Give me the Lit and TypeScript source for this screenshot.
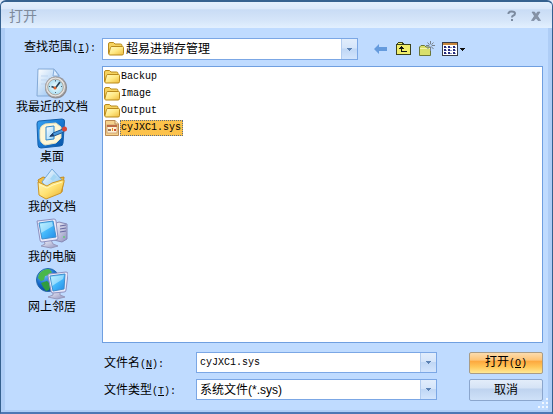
import { LitElement, html, css, svg } from "lit";
import { customElement, property, state } from "lit/decorators.js";
import { classMap } from "lit/directives/class-map.js";

const folderIcon = html`<svg class="icon" width="16" height="16" viewBox="0 0 16 16" aria-hidden="true">
  <defs><linearGradient id="ff" x1="0" y1="0" x2="1" y2="1"><stop offset="0" stop-color="#fffbc8"/><stop offset=".5" stop-color="#ffe985"/><stop offset="1" stop-color="#eebb3c"/></linearGradient></defs>
  <path d="M.5 12.500V3Q.5 1.500 2 1.500H5.500L7 3H12.500Q14 3 14 4.500V7H4Z" fill="#f5d25f" stroke="#b98a1c"/>
  <path d="M1 13.500V12L2.500 6.500Q2.800 5.500 4 5.500H14.500Q15.500 5.500 15.500 6.500V12.500Q15.500 14 14 14H2Q1 14 1 13.500Z" fill="url(#ff)" stroke="#b98a1c"/>
</svg>`;

const sysIcon = html`<svg class="icon" width="16" height="16" viewBox="0 0 16 16" aria-hidden="true">
  <path d="M1.500 .5H11L14.500 4V15.500H1.500Z" fill="#f6d28d" stroke="#b98a55"/>
  <path d="M11 .5V4H14.500" fill="#fff0cb" stroke="#b98a55"/>
  <rect x="3" y="5" width="10" height="8" fill="#fff2d4" stroke="#b98d67" stroke-width=".7"/>
  <rect x="3" y="5" width="10" height="2" fill="#bd6a45"/>
  <rect x="4" y="9" width="3" height="2" fill="#9b7459"/><rect x="8" y="8" width="1" height="3" fill="#e98924"/><rect x="10" y="9" width="2" height="2" fill="#cc4e38"/>
</svg>`;

const recentArt = svg`
  <defs><linearGradient id="g1" x1="0" y1="0" x2="1" y2="1"><stop offset="0" stop-color="#fff"/><stop offset="1" stop-color="#87baf0"/></linearGradient>
  <radialGradient id="g2"><stop offset="0" stop-color="#f4ffff"/><stop offset="1" stop-color="#a9dcf2"/></radialGradient></defs>
  <path d="M2 1H18L23 7V28H1Z" fill="url(#g1)" stroke="#83a9d6"/>
  <path d="M18 1L17 8H23Z" fill="#dcecff" stroke="#86addb"/>
  <path d="M5 8H12M5 12H11M5 16H9" stroke="#bfd5ef"/>
  <circle cx="20" cy="19.500" r="11" fill="#8b8b91"/>
  <circle cx="19.500" cy="19" r="10" fill="#e6e4e2" stroke="#aaa7a7"/>
  <circle cx="19.500" cy="19" r="7.800" fill="url(#g2)" stroke="#b0a9a0"/>
  <path d="M15.500 18.500L19.500 20L24 14" fill="none" stroke="#27445b" stroke-width="1.700"/>
  <path d="M19.500 12V13.500M19.500 24V25M13 18.500H14M25 18.500H26" stroke="#536b7d"/>
  <circle cx="19" cy="20" r="1.500" fill="#df662f"/>`;

const desktopArt = svg`
  <defs><linearGradient id="d1" x1="0" y1="0" x2="1" y2="1"><stop offset="0" stop-color="#3aa4f2"/><stop offset=".5" stop-color="#1979d3"/><stop offset="1" stop-color="#0750a2"/></linearGradient>
  <linearGradient id="d2" x1="0" y1="0" x2="1" y2="1"><stop offset="0" stop-color="#fff"/><stop offset="1" stop-color="#92d3fa"/></linearGradient></defs>
  <path d="M3 3L26 1Q29 1 28.500 4L27 25Q27 28 24 28L5 30Q2 30 2 27L1 6Q1 3 3 3Z" fill="url(#d1)" stroke="#1560ac"/>
  <path d="M9 6L20 5L25 9V20L20 25L9 27Q4 25 4 20V12Q4 8 9 6Z" fill="#fff7d6" stroke="#e5e0bc"/>
  <path d="M10 9L18 8V21L10 22Z" fill="url(#d2)" stroke="#3288cc"/>
  <path d="M14 18L17 15L27 11L28 14L18 18Z" fill="#4a9ade" stroke="#1b5794"/>
  <path d="M13 19L17 15L18 18Z" fill="#203c66"/>
  <circle cx="28.500" cy="11" r="2.500" fill="#d94637"/>`;

const documentsArt = svg`
  <defs><linearGradient id="m1" x1="0" y1="0" x2="1" y2="1"><stop offset="0" stop-color="#fffac0"/><stop offset=".5" stop-color="#ffe272"/><stop offset="1" stop-color="#e9aa28"/></linearGradient>
  <linearGradient id="m2" x1="0" y1="0" x2="1" y2="1"><stop offset="0" stop-color="#fff"/><stop offset="1" stop-color="#70b9ef"/></linearGradient></defs>
  <path d="M2 12L7 9L14 11L28 9L26 24L7 28Z" fill="#efbd42" stroke="#c28b20"/>
  <path d="M6 14L16 1L27 13L15 25Z" fill="url(#m2)" stroke="#72a9da"/>
  <path d="M14 11L18 6L21 9L17 13Z" fill="#a3d6f4"/>
  <path d="M2 14L11 18L16 15L26 12Q29 11 28 14L25 25L10 31L3 27Z" fill="url(#m1)" stroke="#cb9629"/>
  <path d="M4 17L11 20L17 17L26 14" fill="none" stroke="#fff7bd"/>`;

const monitorDefs = svg`<defs><linearGradient id="c1" x1="0" y1="0" x2="1" y2="1"><stop offset="0" stop-color="#b3f1ff"/><stop offset=".5" stop-color="#45b9fb"/><stop offset="1" stop-color="#208ae7"/></linearGradient>
  <linearGradient id="c2" x1="0" y1="0" x2="1" y2="1"><stop offset="0" stop-color="#f8f8ff"/><stop offset="1" stop-color="#8e91bd"/></linearGradient>
  <radialGradient id="c3" cx=".35" cy=".25" r=".8"><stop offset="0" stop-color="#79c8ff"/><stop offset=".6" stop-color="#1367ca"/><stop offset="1" stop-color="#073f91"/></radialGradient></defs>`;

const computerArt = svg`${monitorDefs}
  <path d="M18 6L23 4L31 6V21L26 24L18 22Z" fill="url(#c2)" stroke="#8688b4"/>
  <path d="M24 8L30 7M24 11L30 10M24 14L30 13" stroke="#6668a0"/>
  <circle cx="28" cy="19" r="1" fill="#62ca77"/>
  <path d="M8 22L15 22L17 26L22 28L15 30L5 28L9 26Z" fill="url(#c2)" stroke="#9698bb"/>
  <path d="M1 3L18 1Q20 1 20 3L22 20Q22 22 20 22L6 24Q4 24 4 22Z" fill="#e9e8f8" stroke="#8d91c0"/>
  <path d="M3 5L17 3L20 19L6 21Z" fill="url(#c1)" stroke="#3f8fcf"/>
  <path d="M4 6L16 4L17 8L5 15Z" fill="#dbf8ff" opacity=".5"/>`;

const networkArt = svg`${monitorDefs}
  <circle cx="12" cy="12" r="11.500" fill="url(#c3)" stroke="#2469aa"/>
  <path d="M3 6Q7 1 13 1L16 4L13 7L9 8L8 12L5 13L2 10Z" fill="#49b74b"/>
  <path d="M5 15L11 13L15 17L13 22L10 23L7 19Z" fill="#309c3f"/>
  <path d="M17 23L24 23L24 27L29 29L21 31L12 29L17 27Z" fill="url(#c2)" stroke="#9698bb"/>
  <path d="M13 6L30 4Q32 4 32 6L30 22Q30 24 28 24L17 25Q15 25 15 23L12 8Q12 6 13 6Z" fill="#e9e8f8" stroke="#8d91c0"/>
  <path d="M14 8L29 6L28 21L17 23Z" fill="url(#c1)" stroke="#3f8fcf"/>
  <path d="M15 9L28 7L27 11L16 18Z" fill="#dbf8ff" opacity=".5"/>`;

const places = [
  { name: "我最近的文档", art: recentArt },
  { name: "桌面", art: desktopArt },
  { name: "我的文档", art: documentsArt },
  { name: "我的电脑", art: computerArt },
  { name: "网上邻居", art: networkArt },
];

const baseText = css`
  * { box-sizing: border-box; }
  button, input, select {
    margin: 0;
    padding: 0;
    border: 0;
    border-radius: 0;
    background: none;
    color: inherit;
    font: inherit;
    appearance: none;
  }
  svg { display: block; flex: none; }
  .latin { font-family: "Liberation Mono", monospace; font-size: 10px; }
  .key { text-decoration: underline; }
`;

const arrow = html`<svg width="5" height="3" viewBox="0 0 5 3" shape-rendering="crispEdges" aria-hidden="true"><path d="M0 0H5V1H4V2H3V3H2V2H1V1H0Z" fill="#5c82b3"/></svg>`;

@customElement("places-bar")
export class PlacesBar extends LitElement {
  static styles = [
    baseText,
    css`
      :host { display: flex; flex-direction: column; align-items: stretch; gap: 2px; }
      .place { display: flex; flex-direction: column; align-items: center; height: 48px; }
      .name { line-height: 14px; white-space: nowrap; }
    `,
  ];

  render() {
    return places.map(
      (p) => html`<button class="place" type="button">
        <svg width="32" height="32" viewBox="0 0 32 32" aria-hidden="true">${p.art}</svg>
        <span class="name">${p.name}</span>
      </button>`
    );
  }
}

@customElement("file-list")
export class FileList extends LitElement {
  @property() selected = "";

  static styles = [
    baseText,
    css`
      :host { display: block; background: #fff; border: 1px solid #6f9fe0; padding: 1px; }
      .file { display: flex; align-items: center; height: 17px; }
      .name {
        height: 16px;
        padding-right: 1px;
        border: 1px solid transparent;
        line-height: 14px;
      }
      .selected .name { background: #fcc24b; border: 1px dotted #5c6d85; }
    `,
  ];

  render() {
    return ["Backup", "Image", "Output", "cyJXC1.sys"].map(
      (name) => html`<button type="button"
        class=${classMap({ file: true, selected: name === this.selected })}
        @click=${() => this.dispatchEvent(new CustomEvent("pick", { detail: name }))}>
        ${name.endsWith(".sys") ? sysIcon : folderIcon}<span class="name latin">${name}</span>
      </button>`
    );
  }
}

@customElement("app-root")
export class AppRoot extends LitElement {
  @state() private file = "cyJXC1.sys";

  static styles = [
    baseText,
    css`
      :host {
        display: block;
        background: #dfeafa;
        color: #000;
        font: 12px/16px "Liberation Sans", "Noto Sans CJK SC", sans-serif;
      }
      .window {
        display: flex;
        flex-direction: column;
        min-height: 100vh;
        border: 1px solid #35618f;
        border-top-width: 2px;
        border-bottom: 2px solid #4d77b4;
        border-radius: 6px 6px 0 0;
        background: #bfdbff;
        overflow: hidden;
      }
      .title {
        display: flex;
        align-items: center;
        height: 26px;
        padding: 2px 10px 0 8px;
        background: linear-gradient(#e3effd 0, #dbe8fa 25%, #c9dcf5 30%, #d5e5f9 70%, #e2f0ff 100%);
      }
      h1 { flex: 1; margin: 0; font-size: 14px; line-height: 20px; font-weight: 400; color: #7e8a9b; }
      .caption { display: flex; gap: 12px; }
      .caption button { width: 12px; height: 12px; }
      .body {
        flex: 1;
        display: grid;
        grid-template-columns: 92px minmax(0, 1fr);
        grid-template-rows: 22px minmax(276px, 1fr) auto;
        row-gap: 6px;
        padding: 10px 5px 9px 5px;
        border: solid #aecdf6;
        border-width: 0 4px 2px;
      }
      .look-label { padding: 0 8px 0 14px; line-height: 18px; white-space: nowrap; }
      .look { display: flex; }
      .combo { position: relative; display: flex; min-width: 0; border: 1px solid #7ba7e5; background: #fff; }
      .look .combo { flex: 1; }
      .combo select, .combo input { flex: 1; min-width: 0; width: 100%; outline: none; padding: 0 18px 0 3px; }
      .combo .with-icon { padding-left: 23px; }
      .glyph { position: absolute; left: 5px; top: 2px; pointer-events: none; }
      .drop {
        position: absolute;
        top: 0;
        right: 0;
        bottom: 0;
        display: flex;
        align-items: center;
        justify-content: center;
        width: 16px;
        background: linear-gradient(#e1edfc 0, #d5e5fa 45%, #c0d7f5 50%, #d3e5fd 100%);
        border-left: 1px solid #b2ccef;
        pointer-events: none;
      }
      .tools { display: flex; align-items: center; gap: 7px; width: 185px; padding-left: 15px; }
      places-bar { grid-row: 2 / 4; padding: 2px 8px 0 0; }
      .form {
        grid-column: 2;
        display: grid;
        grid-template-columns: 94px minmax(0, 1fr) 74px;
        grid-auto-rows: 22px;
        row-gap: 5px;
        padding-top: 3px;
      }
      .form label { padding-left: 2px; line-height: 22px; white-space: nowrap; }
      .form .combo { height: 21px; margin-right: 32px; }
      .action {
        border: 1px solid #8ba6cd;
        border-radius: 2px;
        background: linear-gradient(#e3edfa 0, #d5e3f6 40%, #bed3ef 45%, #cfe1f8 100%);
      }
      .primary {
        border-color: #a99c86;
        background: linear-gradient(#fbdcae 0, #fec476 35%, #fda93f 42%, #ffc759 70%, #ffe995 100%);
      }
      .grip { position: fixed; right: 4px; bottom: 5px; }
    `,
  ];

  private key(k: string, tail = ":") {
    return html`<span class="latin">(<span class="key">${k}</span>)${tail}</span>`;
  }

  render() {
    return html`<main class="window">
      <header class="title">
        <h1>打开</h1>
        <div class="caption">
          <button type="button" aria-label="帮助"><svg width="12" height="12" viewBox="0 0 12 12"><path d="M2.500 4V3Q3 1.500 5.500 1.500Q9 1.500 9 3.500Q9 5 7 5.700Q6 6 6 7.500M6 9V11" fill="none" stroke="#7b8a9f" stroke-width="2"/></svg></button>
          <button type="button" aria-label="关闭"><svg width="12" height="12" viewBox="0 0 12 12"><path d="M2 2H4.500L6 4.500L7.500 2H10L7.500 6L10.500 10.500H8L6 8L4 10.500H1.500L4.500 6Z" fill="#8793a5" stroke="#728198" stroke-width=".6"/></svg></button>
        </div>
      </header>
      <div class="body">
        <label class="look-label" for="look">查找范围${this.key("I")}</label>
        <div class="look">
          <div class="combo">
            <select id="look" class="with-icon"><option>超易进销存管理</option></select>
            <span class="glyph">${folderIcon}</span>
            <span class="drop">${arrow}</span>
          </div>
          <div class="tools">
            <button type="button" aria-label="后退"><svg width="16" height="16" viewBox="0 0 16 16"><path d="M1 8L6 3V6H14V10H6V13Z" fill="#659bdd"/></svg></button>
            <button type="button" aria-label="向上一级"><svg width="16" height="16" viewBox="0 0 16 16" shape-rendering="crispEdges"><path d="M0 14V3H1V2H2V1H7V2H8V3H15V14Z" fill="#3b421d"/><path d="M1 13V4H14V13ZM2 3V2H6V3Z" fill="#f0ed6b"/><path d="M5 5H6V6H7V7H8V8H6V10H11V11H5V8H3V7H4V6H5Z" fill="#111"/></svg></button>
            <button type="button" aria-label="新建文件夹"><svg width="16" height="16" viewBox="0 0 16 16"><path d="M.5 14.500V6L2 4.500H5.500L7 6H11.500V14.500Z" fill="#d9df6c" stroke="#6c7838"/><path d="M1 7.500H11" stroke="#f4f3a8"/><path d="M11.500 0V10M7 4.500H16M8.500 1.500L14.500 8M14.500 1.500L8.500 8" stroke="#76808c"/><circle cx="11.500" cy="4.500" r="1.300" fill="#bfdbff"/></svg></button>
            <button type="button" aria-label="视图"><svg width="24" height="16" viewBox="0 0 24 16" shape-rendering="crispEdges"><path d="M0 1H16V15H0Z" fill="#383b48"/><path d="M1 4H15V14H1Z" fill="#fff"/><path d="M1 2H15V4H1Z" fill="#c7863d"/><path d="M2 5H4V7H2ZM6 5H8V7H6ZM11 5H13V7H11ZM2 8H4V10H2ZM6 8H8V10H6ZM11 8H13V10H11ZM2 11H4V13H2ZM6 11H8V13H6ZM11 11H13V13H11Z" fill="#262b7d"/><path d="M4 6H5V7H4ZM8 6H10V7H8ZM13 6H14V7H13ZM4 9H5V10H4ZM8 9H10V10H8ZM13 9H14V10H13ZM4 12H5V13H4ZM8 12H10V13H8ZM13 12H14V13H13Z" fill="#8a92c5"/><path d="M18 7H23V8H22V9H21V10H20V9H19V8H18Z" fill="#111"/></svg></button>
          </div>
        </div>
        <places-bar></places-bar>
        <file-list .selected=${this.file} @pick=${(e: CustomEvent) => (this.file = e.detail)}></file-list>
        <div class="form">
          <label for="name">文件名${this.key("N")}</label>
          <div class="combo"><input id="name" class="latin" .value=${this.file} /><span class="drop">${arrow}</span></div>
          <button class="action primary" type="button">打开${this.key("O", "")}</button>
          <label for="type">文件类型${this.key("T")}</label>
          <div class="combo"><select id="type"><option>系统文件(*.sys)</option></select><span class="drop">${arrow}</span></div>
          <button class="action" type="button">取消</button>
        </div>
      </div>
      <svg class="grip" width="11" height="11" viewBox="0 0 11 11" shape-rendering="crispEdges" aria-hidden="true"><path d="M8 0H10V2H8ZM4 4H6V6H4ZM8 4H10V6H8ZM0 8H2V10H0ZM4 8H6V10H4ZM8 8H10V10H8Z" fill="#f0f7ff"/></svg>
    </main>`;
  }
}
